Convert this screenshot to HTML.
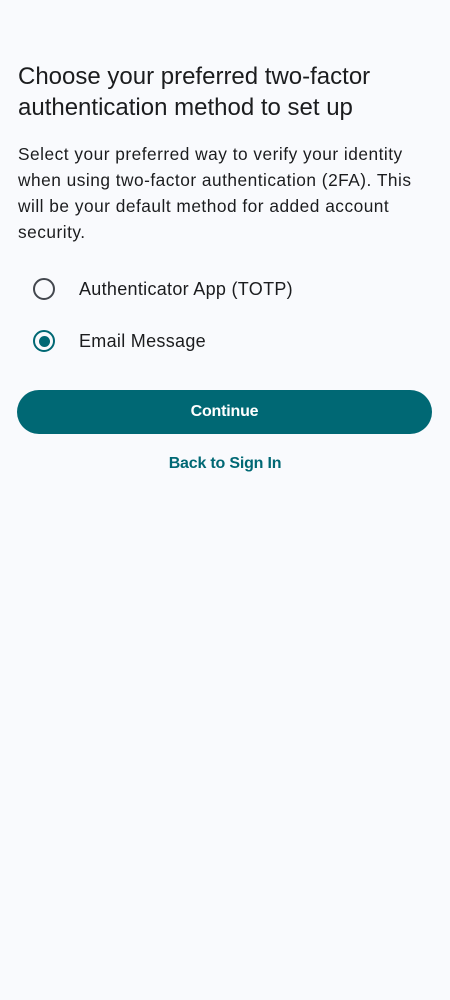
<!DOCTYPE html>
<html><head><style>
body{margin:0;width:450px;height:1000px;background:#f9fafd;font-family:"Liberation Sans",sans-serif;color:#1b1c1e;position:relative;overflow:hidden}
.t{position:absolute;left:18px;top:61px;font-size:24px;line-height:31px;width:420px;letter-spacing:0}
.p{position:absolute;left:18px;top:141px;font-size:17.3px;line-height:26px;width:405px;letter-spacing:0.5px}
.r{position:absolute;left:33px;width:22px;height:22px;box-sizing:border-box;border:2.2px solid #43474e;border-radius:50%}
.r.on{border-color:#006874}
.r.on::after{content:"";position:absolute;left:3.5px;top:3.5px;width:11px;height:11px;border-radius:50%;background:#006874}
.l{position:absolute;left:79px;font-size:18px;letter-spacing:0.3px}
.b{position:absolute;left:17px;top:390px;width:415px;height:44px;border-radius:22px;background:#006874;color:#fff;text-align:center;line-height:44px;font-size:16px;font-weight:bold;letter-spacing:-0.2px}
.k{position:absolute;left:0;width:450px;top:455px;text-align:center;color:#006874;font-size:16px;font-weight:bold;letter-spacing:-0.2px}
</style></head><body>
<div class="t">Choose your preferred two-factor authentication method to set up</div>
<div class="p">Select your preferred way to verify your identity when using two-factor authentication (2FA). This will be your default method for added account security.</div>
<div class="r" style="top:278px"></div><div class="l" style="top:279px">Authenticator App (TOTP)</div>
<div class="r on" style="top:330px"></div><div class="l" style="top:331px">Email Message</div>
<div class="b">Continue</div>
<div class="k">Back to Sign In</div>
</body></html>
